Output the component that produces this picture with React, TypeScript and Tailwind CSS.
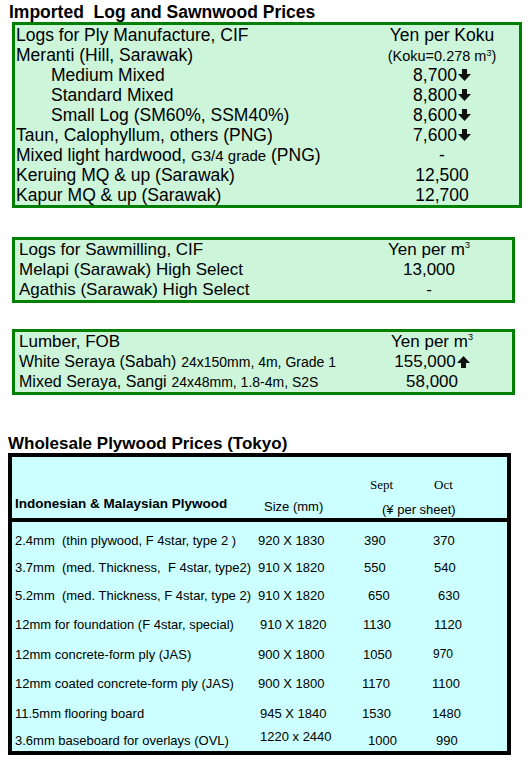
import React from "react";

const SANS = { fontFamily: '"Liberation Sans", Arial, sans-serif' };
const SERIF = { fontFamily: '"Liberation Serif", "Times New Roman", serif' };

function Down() {
  return (
    <svg width="13" height="12" viewBox="0 0 13 12" className="inline-block ml-[1px]">
      <path d="M4 0 H9 V5 H13 L6.5 12 L0 5 H4 Z" fill="#111" />
    </svg>
  );
}
function Up() {
  return (
    <svg width="13" height="12" viewBox="0 0 13 12" className="inline-block ml-[1px]">
      <path d="M4 12 H9 V7 H13 L6.5 0 L0 7 H4 Z" fill="#111" />
    </svg>
  );
}

function Row({ left, right, indent }: { left: React.ReactNode; right?: React.ReactNode; indent?: boolean }) {
  return (
    <div className="flex h-[20px] items-center">
      <div className={"flex-1 whitespace-nowrap " + (indent ? "pl-[35px]" : "")}>{left}</div>
      <div className="w-[150px] text-center whitespace-nowrap">{right}</div>
    </div>
  );
}

type PRow = { name: string; size: string; sept: string; oct: string; h: number; sp: number; op: number; zp: number; octSmall?: boolean; sizePb?: number };

const rows: PRow[] = [
  { name: "2.4mm  (thin plywood, F 4star, type 2 )", size: "920 X 1830", sept: "390", oct: "370", h: 30, zp: 258, sp: 364, op: 433 },
  { name: "3.7mm  (med. Thickness,  F 4star, type2)", size: "910 X 1820", sept: "550", oct: "540", h: 24, zp: 258, sp: 364, op: 434 },
  { name: "5.2mm  (med. Thickness, F 4star, type 2)", size: "910 X 1820", sept: "650", oct: "630", h: 32, zp: 258, sp: 368, op: 438 },
  { name: "12mm for foundation (F 4star, special)", size: "910 X 1820", sept: "1130", oct: "1120", h: 26, zp: 260, sp: 363, op: 434 },
  { name: "12mm concrete-form ply (JAS)", size: "900 X 1800", sept: "1050", oct: "970", h: 34, zp: 258, sp: 363, op: 433, octSmall: true },
  { name: "12mm coated concrete-form ply (JAS)", size: "900 X 1800", sept: "1170", oct: "1100", h: 24, zp: 258, sp: 361, op: 430 },
  { name: "11.5mm flooring board", size: "945 X 1840", sept: "1530", oct: "1480", h: 36, zp: 260, sp: 361, op: 430 },
  { name: "3.6mm baseboard for overlays (OVL)", size: "1220 x 2440", sept: "1000", oct: "990", h: 18, zp: 260, sp: 368, op: 436, sizePb: 8 },
];

function M3() {
  return (
    <span>
      Yen per m<sup className="text-[9px] relative -top-[7px]">3</sup>
    </span>
  );
}

export default function App() {
  const boxCls = "border-[3px] border-[#008000] bg-[#cdf5da] leading-[20px] text-black";
  return (
    <div className="w-[530px] min-h-[766px] bg-white text-black" style={SANS}>
      <div className="pl-[9px] pt-[2px] h-[22px] text-[17.5px] leading-[20px] font-bold whitespace-pre">Imported  Log and Sawnwood Prices</div>

      <div className={"ml-[12px] w-[510px] text-[17.5px] " + boxCls}>
        <div className="pl-[1px] pr-[2px]">
          <Row left="Logs for Ply Manufacture, CIF" right="Yen per Koku" />
          <Row
            left="Meranti (Hill, Sarawak)"
            right={
              <span className="text-[14.5px]">
                (Koku=0.278 m<sup className="text-[9px] relative -top-[5px]">3</sup>)
              </span>
            }
          />
          <Row indent left="Medium Mixed" right={<span className="inline-flex items-center">8,700<Down /></span>} />
          <Row indent left="Standard Mixed" right={<span className="inline-flex items-center">8,800<Down /></span>} />
          <Row indent left="Small Log (SM60%, SSM40%)" right={<span className="inline-flex items-center">8,600<Down /></span>} />
          <Row left="Taun, Calophyllum, others (PNG)" right={<span className="inline-flex items-center">7,600<Down /></span>} />
          <Row
            left={
              <span>
                Mixed light hardwood, <span className="text-[15px]">G3/4 grade</span> (PNG)
              </span>
            }
            right="-"
          />
          <Row left="Keruing MQ & up (Sarawak)" right="12,500" />
          <Row left="Kapur MQ & up (Sarawak)" right="12,700" />
        </div>
      </div>

      <div className={"ml-[12px] mt-[29px] w-[503px] text-[17px] " + boxCls}>
        <div className="pl-[4px] pr-[8px]">
          <Row left="Logs for Sawmilling, CIF" right={<M3 />} />
          <Row left="Melapi (Sarawak) High Select" right="13,000" />
          <Row left="Agathis (Sarawak) High Select" right="-" />
        </div>
      </div>

      <div className={"ml-[12px] mt-[26px] w-[503px] text-[17px] " + boxCls}>
        <div className="pl-[4px] pr-[5px]">
          <Row left="Lumber, FOB" right={<M3 />} />
          <Row
            left={
              <span>
                <span className="text-[16px]">White Seraya (Sabah)</span> <span className="text-[14px]">24x150mm, 4m, Grade 1</span>
              </span>
            }
            right={<span className="inline-flex items-center">155,000<Up /></span>}
          />
          <Row
            left={
              <span>
                <span className="text-[16px]">Mixed Seraya, Sangi</span> <span className="text-[14px]">24x48mm, 1.8-4m, S2S</span>
              </span>
            }
            right="58,000"
          />
        </div>
      </div>

      <div className="mt-[39px] pl-[8px] h-[19px] text-[17px] leading-[19px] font-bold">Wholesale Plywood Prices (Tokyo)</div>

      <div className="ml-[8px] w-[503px] border-[4px] border-black bg-[#ccffff] text-[13px] leading-[15px]">
        <div className="relative h-[65px] border-b-[4px] border-black">
          <div className="absolute left-[3px] top-[39px] font-bold text-[13.5px]">Indonesian &amp; Malaysian Plywood</div>
          <div className="absolute left-[252px] top-[42px]">Size (mm)</div>
          <div className="absolute left-[358px] top-[20px] text-[13px]" style={SERIF}>Sept</div>
          <div className="absolute left-[422px] top-[20px] text-[13px]" style={SERIF}>Oct</div>
          <div className="absolute left-[370px] top-[45px]">(¥ per sheet)</div>
        </div>
        <div className="pt-[3px] pb-[2px]">
          {rows.map((r) => (
            <div key={r.name} className="flex items-center whitespace-pre" style={{ height: r.h }}>
              <div className="w-[246px] pl-[3px]">{r.name}</div>
              <div className="w-[104px] whitespace-nowrap" style={{ paddingLeft: r.zp - 258, paddingBottom: r.sizePb ?? 0 }}>{r.size}</div>
              <div className="w-[70px]" style={{ paddingLeft: r.sp - 362 }}>{r.sept}</div>
              <div className={r.octSmall ? "text-[12px]" : ""} style={{ paddingLeft: r.op - 432 }}>{r.oct}</div>
            </div>
          ))}
        </div>
      </div>
    </div>
  );
}
